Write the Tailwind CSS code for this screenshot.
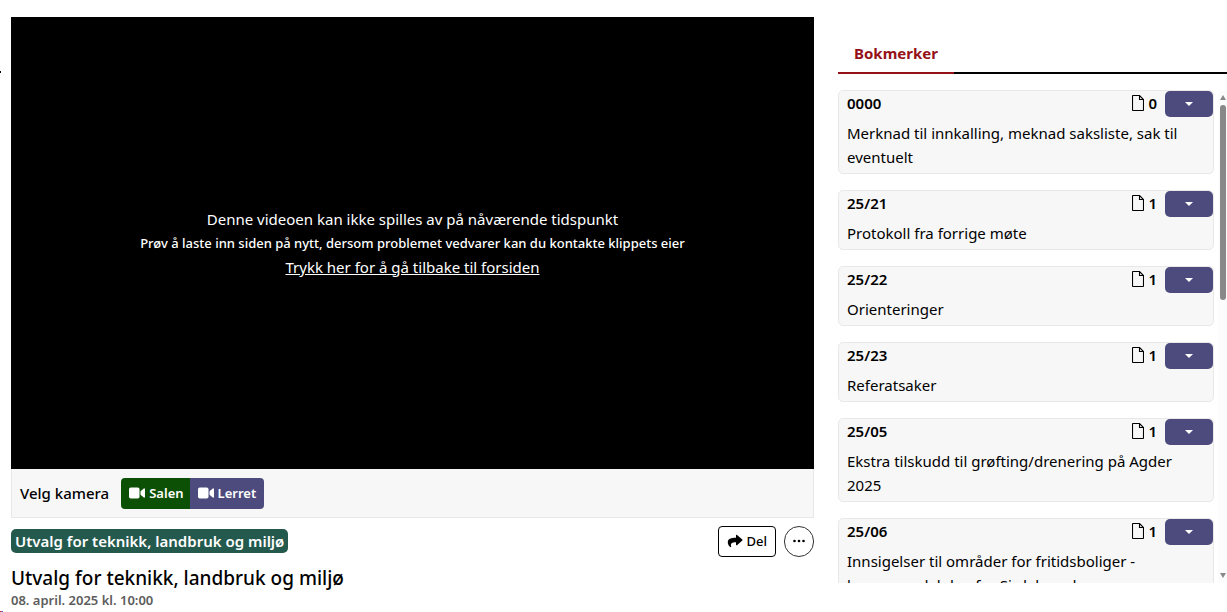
<!DOCTYPE html>
<html lang="no">
<head>
<meta charset="UTF-8">
<meta name="viewport" content="width=device-width, initial-scale=1.0">
<title>Utvalg for teknikk, landbruk og miljø</title>
<script src="https://cdn.jsdelivr.net/npm/@tailwindcss/browser@4"></script>
</head>
<body class="relative h-screen overflow-hidden bg-white font-['Noto_Sans','Open_Sans',sans-serif] text-[15px] leading-6 text-black">

<svg class="hidden">
    <symbol id="file" viewBox="0 0 12 16"><path d="M1.500.5h6l4 4v10.200a.8.8 0 0 1-.8.8H1.300a.8.8 0 0 1-.8-.8V1.300a.8.8 0 0 1 .8-.8zM7.500.5v4h4" fill="none" stroke="currentColor" stroke-width="1.100"/></symbol>
    <symbol id="caret" viewBox="0 0 8 4"><path d="M0 0h8L4 4z" fill="currentColor"/></symbol>
    <symbol id="camera" viewBox="0 0 16 12"><rect y=".5" width="10.500" height="11" rx="1.800" fill="currentColor"/><path d="M11.500 4.200 14.800 1.600a.7.7 0 0 1 1.200.6v7.600a.7.7 0 0 1-1.200.6L11.500 7.800z" fill="currentColor"/></symbol>
</svg>

<main class="flex h-full gap-6 pl-[11px] pt-[17px]">
    <div class="min-w-0 flex-1">
        <section class="flex aspect-video flex-col items-center justify-center bg-black text-center text-white">
            <p>Denne videoen kan ikke spilles av på nåværende tidspunkt</p>
            <p class="text-[13px] font-medium leading-6">Prøv å laste inn siden på nytt, dersom problemet vedvarer kan du kontakte klippets eier</p>
            <a href="/" class="underline">Trykk her for å gå tilbake til forsiden</a>
        </section>
        <section class="flex items-center gap-3 border border-t-0 border-[#e8e8e8] bg-[#f7f7f7] px-2 pb-2 pt-[9px]">
            <span class="font-medium">Velg kamera</span>
            <div class="flex overflow-hidden rounded text-[13px] font-semibold text-white">
                <button class="flex h-[31px] items-center gap-1 bg-[#0b5004] pl-2 pr-[6px]"><svg class="h-3 w-4"><use href="#camera"/></svg>Salen</button>
                <button class="flex h-[31px] items-center gap-1 bg-[#4d4a7e] px-2"><svg class="h-3 w-4"><use href="#camera"/></svg>Lerret</button>
            </div>
        </section>
        <div class="flex items-center justify-between pt-2">
            <a href="#" class="rounded-[5px] bg-[#24594d] px-1 font-semibold text-white">Utvalg for teknikk, landbruk og miljø</a>
            <div class="flex gap-2">
                <button class="flex h-[31px] items-center gap-1 rounded border border-black px-2 text-[13px] font-medium">
                    <svg class="h-4 w-4" viewBox="0 0 16 16"><path d="M9 2.300a.6.6 0 0 1 1-.4l5.300 4.700a.6.6 0 0 1 0 .9L10 12.200a.6.6 0 0 1-1-.5V9.300C5 9.300 3.200 10.400 4.200 13.600c.1.5-.4.8-.8.5C1.800 13 .8 11.200.8 9.400.8 5.800 4 4.800 9 4.800z" fill="currentColor"/></svg>Del</button>
                <button aria-label="Flere valg" class="flex h-[31px] w-[30px] items-center justify-center rounded-full border border-[#333]"><svg class="h-1 w-3" viewBox="0 0 12 4" fill="currentColor"><circle cx="1.500" cy="2" r="1.300"/><circle cx="6" cy="2" r="1.300"/><circle cx="10.500" cy="2" r="1.300"/></svg></button>
            </div>
        </div>
        <h1 class="pt-[7px] text-[19px] font-medium leading-7">Utvalg for teknikk, landbruk og miljø</h1>
        <p class="text-[13px] font-semibold leading-4 text-[#5c5c5c]">08. april. 2025 kl. 10:00</p>
    </div>

    <aside class="flex w-[389px] flex-col pb-[29px]">
        <nav class="flex border-b-2 border-black pt-4">
            <a href="#bokmerker" class="-mb-[2px] border-b-2 border-[#951118] px-4 pb-[7px] pt-2 font-bold text-[#951118]">Bokmerker</a>
        </nav>
        <div class="mt-4 flex min-h-0 flex-1 gap-1">
            <ul id="bokmerker" class="flex flex-1 flex-col gap-4 overflow-hidden">
                <li class="shrink-0 rounded-[5px] border border-[#e8e8e8] bg-[#f7f7f7] pb-1">
                    <div class="flex h-[26px] items-start pl-2 font-semibold"><span class="flex-1">0000</span><svg class="mr-1 mt-1 h-4 w-3"><use href="#file"/></svg>0<button aria-label="Vis 0000" class="ml-2 flex h-full w-12 items-center justify-center rounded-[5px] bg-[#4d4a7e] text-white"><svg class="h-1 w-2"><use href="#caret"/></svg></button></div>
                    <p class="px-2 pt-1">Merknad til innkalling, meknad saksliste, sak til eventuelt</p>
                </li>
                <li class="shrink-0 rounded-[5px] border border-[#e8e8e8] bg-[#f7f7f7] pb-1">
                    <div class="flex h-[26px] items-start pl-2 font-semibold"><span class="flex-1">25/21</span><svg class="mr-1 mt-1 h-4 w-3"><use href="#file"/></svg>1<button aria-label="Vis 25/21" class="ml-2 flex h-full w-12 items-center justify-center rounded-[5px] bg-[#4d4a7e] text-white"><svg class="h-1 w-2"><use href="#caret"/></svg></button></div>
                    <p class="px-2 pt-1">Protokoll fra forrige møte</p>
                </li>
                <li class="shrink-0 rounded-[5px] border border-[#e8e8e8] bg-[#f7f7f7] pb-1">
                    <div class="flex h-[26px] items-start pl-2 font-semibold"><span class="flex-1">25/22</span><svg class="mr-1 mt-1 h-4 w-3"><use href="#file"/></svg>1<button aria-label="Vis 25/22" class="ml-2 flex h-full w-12 items-center justify-center rounded-[5px] bg-[#4d4a7e] text-white"><svg class="h-1 w-2"><use href="#caret"/></svg></button></div>
                    <p class="px-2 pt-1">Orienteringer</p>
                </li>
                <li class="shrink-0 rounded-[5px] border border-[#e8e8e8] bg-[#f7f7f7] pb-1">
                    <div class="flex h-[26px] items-start pl-2 font-semibold"><span class="flex-1">25/23</span><svg class="mr-1 mt-1 h-4 w-3"><use href="#file"/></svg>1<button aria-label="Vis 25/23" class="ml-2 flex h-full w-12 items-center justify-center rounded-[5px] bg-[#4d4a7e] text-white"><svg class="h-1 w-2"><use href="#caret"/></svg></button></div>
                    <p class="px-2 pt-1">Referatsaker</p>
                </li>
                <li class="shrink-0 rounded-[5px] border border-[#e8e8e8] bg-[#f7f7f7] pb-1">
                    <div class="flex h-[26px] items-start pl-2 font-semibold"><span class="flex-1">25/05</span><svg class="mr-1 mt-1 h-4 w-3"><use href="#file"/></svg>1<button aria-label="Vis 25/05" class="ml-2 flex h-full w-12 items-center justify-center rounded-[5px] bg-[#4d4a7e] text-white"><svg class="h-1 w-2"><use href="#caret"/></svg></button></div>
                    <p class="px-2 pt-1">Ekstra tilskudd til grøfting/drenering på Agder 2025</p>
                </li>
                <li class="shrink-0 rounded-[5px] border border-[#e8e8e8] bg-[#f7f7f7] pb-1">
                    <div class="flex h-[26px] items-start pl-2 font-semibold"><span class="flex-1">25/06</span><svg class="mr-1 mt-1 h-4 w-3"><use href="#file"/></svg>1<button aria-label="Vis 25/06" class="ml-2 flex h-full w-12 items-center justify-center rounded-[5px] bg-[#4d4a7e] text-white"><svg class="h-1 w-2"><use href="#caret"/></svg></button></div>
                    <p class="px-2 pt-1">Innsigelser til områder for fritidsboliger -<br>kommunedelplan for Sirdal nord</p>
                </li>
            </ul>
            <div class="flex w-[9px] flex-col items-center bg-[#fcfcfc] py-[5px] text-[#888]">
                <svg class="h-[5px] w-[6px]" viewBox="0 0 6 5"><path d="M0 5h6L3 0z" fill="currentColor"/></svg>
                <div class="mt-[5px] h-[195px] w-[6px] rounded-full bg-[#888]"></div>
                <svg class="mt-auto h-[5px] w-[6px]" viewBox="0 0 6 5"><path d="M0 0h6L3 5z" fill="currentColor"/></svg>
            </div>
        </div>
    </aside>
</main>
<span class="absolute left-0 top-[71px] h-[2px] w-px bg-black"></span>
<span class="absolute bottom-0 left-0 h-px w-[3px] bg-linear-to-r from-red-600 to-blue-600"></span>
</body>
</html>
